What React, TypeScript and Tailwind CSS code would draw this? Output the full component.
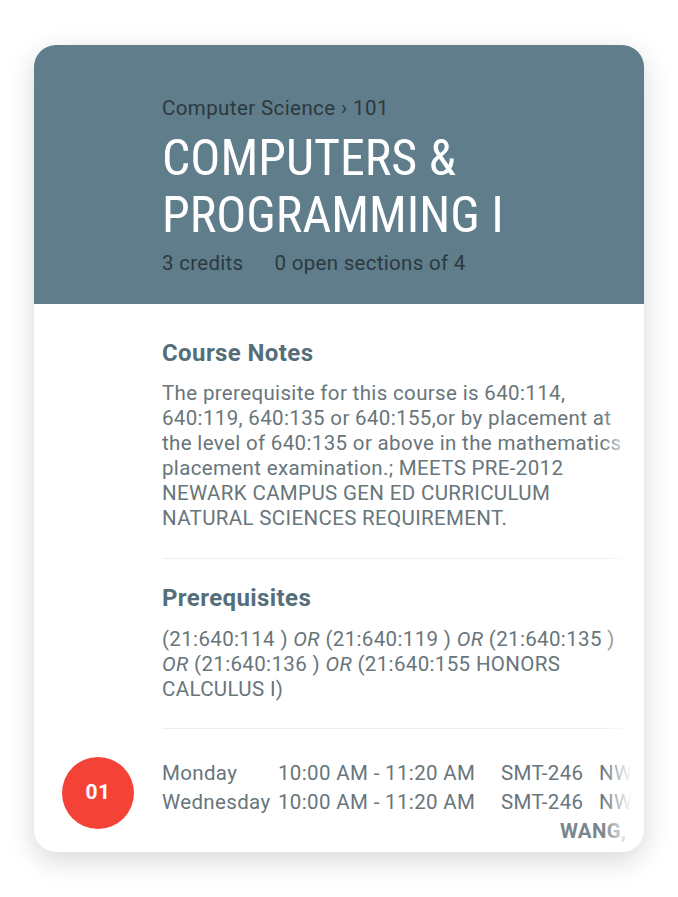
const sections = [
  {
    num: '01',
    meetings: [
      { day: 'Monday', time: '10:00 AM - 11:20 AM', room: 'SMT-246', campus: 'NWK' },
      { day: 'Wednesday', time: '10:00 AM - 11:20 AM', room: 'SMT-246', campus: 'NWK' },
    ],
    instructor: 'WANG, DAVID',
  },
];

const font = { fontFamily: 'Roboto, "Noto Sans", sans-serif' };

export default function App() {
  return (
    <div className="min-h-screen bg-white pt-[45px] pl-[34px]" style={font}>
      <div className="w-[610px] h-[807px] rounded-[22px] overflow-hidden bg-white shadow-[0_8px_28px_rgba(0,0,0,0.16)] flex flex-col">
        {/* Header */}
        <div className="bg-[#607d8b] h-[259px] shrink-0 pl-[128px] pt-[51px]">
          <div className="text-[20.5px] leading-[24px] tracking-[0.4px] text-[#2c393f]">Computer Science › 101</div>
          <h1 className="mt-[10px] text-[50px] leading-[57px] text-white font-normal uppercase font-stretch-condensed">
            Computers &amp;
            <br />
            Programming I
          </h1>
          <div className="mt-[7px] flex gap-[31px] text-[20.5px] leading-[24px] tracking-[0.3px] text-[#2c393f]">
            <span>3 credits</span>
            <span>0 open sections of 4</span>
          </div>
        </div>

        {/* Body */}
        <div className="flex-1 flex">
          <div className="w-[128px] shrink-0 flex flex-col justify-end pb-[23px] items-center">
            <div className="w-[72px] h-[72px] rounded-full bg-[#f44336] flex items-center justify-center text-white font-bold text-[21px] tracking-[0.5px]">
              {sections[0].num}
            </div>
          </div>
          <div className="relative w-[470px] overflow-hidden">
            <div className="w-[474px]">
              <section className="pt-[35px] pb-[27px] border-b border-[#eceff1]">
                <h2 className="text-[24px] leading-[28px] font-bold tracking-[0.4px] text-[#546e7a]">Course Notes</h2>
                <p className="mt-[14px] text-[20.5px] leading-[25px] tracking-[0.35px] text-[#68757b]">
                  The prerequisite for this course is 640:114, 640:119, 640:135 or 640:155,or by placement at
                  the level of 640:135 or above in the mathematics placement examination.; MEETS PRE-2012
                  NEWARK CAMPUS GEN ED CURRICULUM NATURAL SCIENCES REQUIREMENT.
                </p>
              </section>
              <section className="pt-[25px] pb-[26px] border-b border-[#eceff1]">
                <h2 className="text-[24px] leading-[28px] font-bold tracking-[0.4px] text-[#546e7a]">Prerequisites</h2>
                <p className="mt-[15px] text-[20.5px] leading-[25px] tracking-[0.35px] text-[#68757b]">
                  (21:640:114 ) <i>OR</i> (21:640:119 ) <i>OR</i> (21:640:135 ) <i>OR</i> (21:640:136 ){' '}
                  <i>OR</i> (21:640:155 HONORS CALCULUS I)
                </p>
              </section>
            </div>
            {sections.map((s) => (
              <div key={s.num} className="pt-[30px] w-[600px] text-[20.5px] leading-[29px] tracking-[0.35px] text-[#68757b]">
                {s.meetings.map((m) => (
                  <div key={m.day} className="flex whitespace-nowrap">
                    <span className="w-[116px]">{m.day}</span>
                    <span className="w-[223px]">{m.time}</span>
                    <span className="w-[98px]">{m.room}</span>
                    <span>{m.campus}</span>
                  </div>
                ))}
                <div className="pl-[398px] font-bold text-[#7a868c] whitespace-nowrap">{s.instructor}</div>
              </div>
            ))}
            <div className="absolute top-0 right-0 h-full w-[30px] bg-gradient-to-r from-white/0 to-white" />
          </div>
        </div>
      </div>
    </div>
  );
}
